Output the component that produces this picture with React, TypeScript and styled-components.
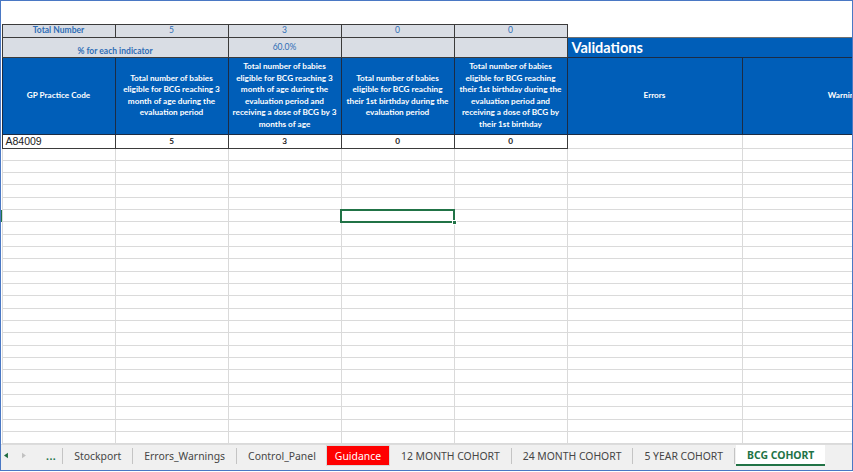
import React from "react";
import styled, { createGlobalStyle, css } from "styled-components";

const GlobalStyle = createGlobalStyle`
    html, body {
        margin: 0;
        padding: 0;
        background: #ffffff;
    }
`;

const Frame = styled.div`
    width: 853px;
    height: 471px;
    box-sizing: border-box;
    border: 1px solid #4a78c4;
    display: flex;
    flex-direction: column;
    overflow: hidden;
    background: #ffffff;
`;

const SheetArea = styled.div`
    flex: 1;
    overflow: hidden;
    position: relative;
`;

const Sheet = styled.table`
    border-collapse: collapse;
    table-layout: fixed;
    width: 947px;
    font-family: Lato, "Open Sans", sans-serif;
`;

const Row = styled.tr<{ $h: number }>`
    height: ${({ $h }) => $h}px;
`;

const RowHead = styled.td<{ $selected?: boolean }>`
    padding: 0;
    border: none;
    background: ${({ $selected }) => ($selected ? "#217346" : "#ffffff")};
`;

const Blank = styled.td`
    padding: 0;
    border: none;
`;

const GridCell = styled.td<{ $selected?: boolean }>`
    padding: 0;
    border: 1px solid #dadada;
    position: relative;
    ${({ $selected }) =>
        $selected &&
        css`
            border: 2px solid #217346;
        `}
`;

const Handle = styled.span`
    position: absolute;
    right: -4px;
    bottom: -4px;
    width: 5px;
    height: 5px;
    background: #217346;
    border: 1px solid #ffffff;
    box-sizing: border-box;
`;

const StatCell = styled.td<{ $bold?: boolean; $align?: "middle" | "bottom" }>`
    padding: 0 2px 1px;
    border: 1px solid #3b3b3b;
    background: #d9dde4;
    color: #2f6db6;
    font-size: 8.5px;
    font-weight: ${({ $bold }) => ($bold ? 700 : 400)};
    text-align: center;
    vertical-align: ${({ $align }) => $align || "middle"};
    white-space: nowrap;
`;

const HeadCell = styled.td`
    padding: 0;
    border: 1px solid #1c2c44;
    background: #005eb8;
    color: #ffffff;
    font-size: 8.2px;
    font-weight: 700;
    line-height: 11.5px;
    text-align: center;
    vertical-align: middle;
    white-space: nowrap;
    overflow: hidden;
`;

const ValidationsCell = styled.td`
    padding: 0 0 0 4px;
    border: 1px solid #1c2c44;
    border-top: 1px solid #707070;
    background: #005eb8;
    color: #ffffff;
    font-size: 14.5px;
    font-weight: 700;
    text-align: left;
    vertical-align: middle;
    white-space: nowrap;
`;

const DataCell = styled.td<{ $code?: boolean }>`
    padding: 0 3px;
    border: 1px solid #3b3b3b;
    color: #222222;
    font-size: 8.2px;
    font-weight: 700;
    text-align: center;
    vertical-align: middle;
    ${({ $code }) =>
        $code &&
        css`
            font-family: "Liberation Sans", Arial, sans-serif;
            font-size: 10.5px;
            font-weight: 400;
            text-align: left;
        `}
`;

const TabBar = styled.div`
    height: 25px;
    flex-shrink: 0;
    display: flex;
    align-items: flex-start;
    background: #f0f0f0;
    border-top: 1px solid #dcdcdc;
    font-family: "Noto Sans", "Open Sans", sans-serif;
    font-size: 10.4px;
    color: #454545;
    padding-left: 3px;
`;

const Nav = styled.div`
    width: 22px;
    height: 21px;
    display: flex;
    align-items: center;
`;

const Ellipsis = styled.div`
    height: 21px;
    display: flex;
    align-items: center;
    margin-left: 20px;
    padding: 0 6px 0 0;
    color: #217346;
    font-weight: 700;
    letter-spacing: 0.5px;
`;

const Separator = styled.div`
    width: 1px;
    height: 16px;
    margin-top: 3px;
    background: #c4c4c4;
`;

const Tab = styled.div<{ $active?: boolean; $flag?: boolean }>`
    height: 21px;
    display: flex;
    align-items: center;
    padding: 0 11px;
    white-space: nowrap;
    box-sizing: border-box;
    ${({ $flag }) =>
        $flag &&
        css`
            background: #ff0000;
            color: #ffffff;
            padding: 0 8px;
            margin: 1px 1px 0 0;
            height: 19px;
            box-shadow: 0 0 0 1px #d9d9d9;
        `}
    ${({ $active }) =>
        $active &&
        css`
            background: #ffffff;
            color: #217346;
            font-weight: 700;
            height: 21px;
            border-bottom: 2px solid #217346;
            margin-left: 1px;
        `}
`;

const Arrow = ({ dir, color }: { dir: "left" | "right"; color: string }) => (
    <svg width="5" height="7" viewBox="0 0 5 7">
        {dir === "left" ? (
            <polygon points="5,0 5,7 0,3.5" fill={color} />
        ) : (
            <polygon points="0,0 0,7 5,3.5" fill={color} />
        )}
    </svg>
);

const NavGap = styled.span`
    width: 18px;
`;

const columns = [1, 113, 113, 113, 113, 113, 175, 206];
const emptyRows = 26;
const selectedRow = 5;

const tabs = [
    "Stockport",
    "Errors_Warnings",
    "Control_Panel",
    "Guidance",
    "12 MONTH COHORT",
    "24 MONTH COHORT",
    "5 YEAR COHORT",
];

const lines = (items: string[]) =>
    items.map((t, i) => (
        <React.Fragment key={i}>
            {t}
            {i < items.length - 1 && <br />}
        </React.Fragment>
    ));

const App = () => {
    return (
        <>
            <GlobalStyle />
            <Frame>
                <SheetArea>
                    <Sheet>
                        <colgroup>
                            {columns.map((w, i) => (
                                <col key={i} style={{ width: w }} />
                            ))}
                        </colgroup>
                        <tbody>
                            <Row $h={23}>
                                <RowHead />
                                {columns.slice(1).map((_, i) => (
                                    <Blank key={i} />
                                ))}
                            </Row>
                            <Row $h={13}>
                                <RowHead />
                                <StatCell $bold>Total Number</StatCell>
                                <StatCell>5</StatCell>
                                <StatCell>3</StatCell>
                                <StatCell>0</StatCell>
                                <StatCell>0</StatCell>
                                <Blank />
                                <Blank />
                            </Row>
                            <Row $h={20}>
                                <RowHead />
                                <StatCell $bold $align="bottom" colSpan={2}>
                                    % for each indicator
                                </StatCell>
                                <StatCell>60.0%</StatCell>
                                <StatCell />
                                <StatCell />
                                <ValidationsCell colSpan={2}>Validations</ValidationsCell>
                            </Row>
                            <Row $h={77}>
                                <RowHead />
                                <HeadCell>GP Practice Code</HeadCell>
                                <HeadCell>
                                    {lines([
                                        "Total number of babies",
                                        "eligible for BCG reaching 3",
                                        "month of age during the",
                                        "evaluation period",
                                    ])}
                                </HeadCell>
                                <HeadCell>
                                    {lines([
                                        "Total number of babies",
                                        "eligible for BCG reaching 3",
                                        "month of age during the",
                                        "evaluation period and",
                                        "receiving a dose of BCG by 3",
                                        "months of age",
                                    ])}
                                </HeadCell>
                                <HeadCell>
                                    {lines([
                                        "Total number of babies",
                                        "eligible for BCG reaching",
                                        "their 1st birthday during the",
                                        "evaluation period",
                                    ])}
                                </HeadCell>
                                <HeadCell>
                                    {lines([
                                        "Total number of babies",
                                        "eligible for BCG reaching",
                                        "their 1st birthday during the",
                                        "evaluation period and",
                                        "receiving a dose of BCG by",
                                        "their 1st birthday",
                                    ])}
                                </HeadCell>
                                <HeadCell>Errors</HeadCell>
                                <HeadCell>Warnings</HeadCell>
                            </Row>
                            <Row $h={14}>
                                <RowHead />
                                <DataCell $code>A84009</DataCell>
                                <DataCell>5</DataCell>
                                <DataCell>3</DataCell>
                                <DataCell>0</DataCell>
                                <DataCell>0</DataCell>
                                <GridCell />
                                <GridCell />
                            </Row>
                            {Array.from({ length: emptyRows }).map((_, r) => (
                                <Row $h={12.33} key={r}>
                                    <RowHead $selected={r === selectedRow} />
                                    {columns.slice(1).map((_, c) => {
                                        const selected = r === selectedRow && c === 3;
                                        return (
                                            <GridCell key={c} $selected={selected}>
                                                {selected && <Handle />}
                                            </GridCell>
                                        );
                                    })}
                                </Row>
                            ))}
                        </tbody>
                    </Sheet>
                </SheetArea>
                <TabBar>
                    <Nav>
                        <Arrow dir="left" color="#1e6b3f" />
                        <NavGap />
                        <Arrow dir="right" color="#c2c2c2" />
                    </Nav>
                    <Ellipsis>...</Ellipsis>
                    <Separator />
                    {tabs.map((t) => (
                        <React.Fragment key={t}>
                            <Tab $flag={t === "Guidance"}>{t}</Tab>
                            {t !== "Control_Panel" && t !== "Guidance" && <Separator />}
                        </React.Fragment>
                    ))}
                    <Tab $active>BCG COHORT</Tab>
                </TabBar>
            </Frame>
        </>
    );
};

export default App;
